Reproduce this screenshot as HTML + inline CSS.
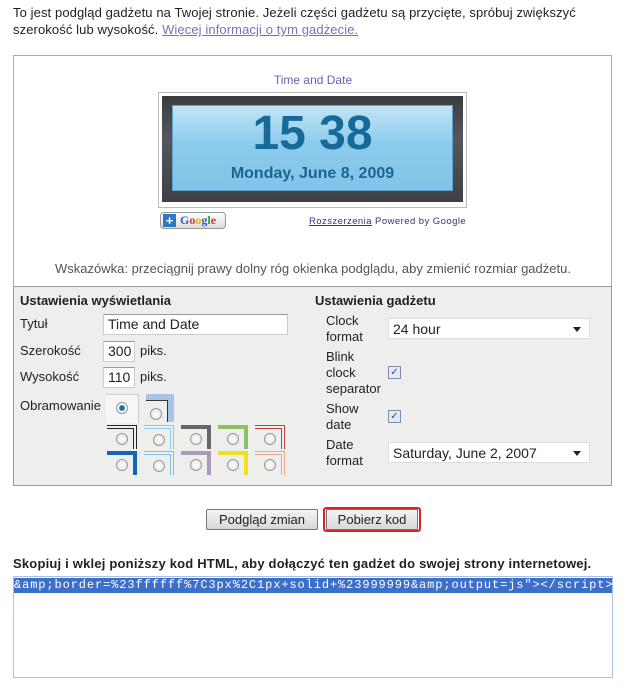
<!DOCTYPE html>
<html><head><meta charset="utf-8"><style>
body{margin:0;width:634px;height:689px;background:#fff;font-family:"Liberation Sans",Arial,sans-serif;color:#222;position:relative;overflow:hidden}
.a{position:absolute;white-space:nowrap}
.t{font-size:13px}
.inp{position:absolute;border:1px solid #ccc;border-top-color:#999;background:#fff;font:14px "Liberation Sans",sans-serif;padding:0 4px;box-sizing:border-box;line-height:19px;height:21px}
.sel{position:absolute;background:#fff;border:1px solid #ddd;font-size:14px;line-height:20px;padding-left:4px;box-sizing:border-box;height:21px}
.sel:after{content:"";position:absolute;right:8px;top:8px;border:4px solid transparent;border-top:5px solid #222}
.cb{position:absolute;width:11px;height:11px;border:1px solid #7c8fa8;background:#e4e9f2;font-size:10px;line-height:11px;text-align:center;color:#2c4fa0}
.rd{position:absolute;width:10px;height:10px;border-radius:50%;border:1px solid #999;background:radial-gradient(#fff,#ddd)}
.lbl{position:absolute;font-size:13px;line-height:16px;color:#222}
.bo{position:absolute;width:30px;height:24px}
</style></head><body>
<div class="a t" style="left:13px;top:5px;letter-spacing:0.1px">To jest podgląd gadżetu na Twojej stronie. Jeżeli części gadżetu są przycięte, spróbuj zwiększyć</div>
<div class="a t" style="left:13px;top:22px;letter-spacing:0.1px">szerokość lub wysokość. <span style="color:#7a6fc0;text-decoration:underline">Więcej informacji o tym gadżecie.</span></div>

<div class="a" style="left:13px;top:55px;width:599px;height:431px;border:1px solid #aaa;box-sizing:border-box"></div>
<div class="a" style="left:0;width:626px;top:73px;text-align:center;font-size:12px;color:#6b62b3">Time and Date</div>
<div class="a" style="left:158px;top:92px;width:309px;height:116px;border:1px solid #bbb;box-sizing:border-box;background:#fff"></div>
<div class="a" style="left:162px;top:96px;width:301px;height:106px;background:linear-gradient(#3a3b3f,#55575c 40%,#3f4044)"></div>
<div class="a" style="left:172px;top:105px;width:281px;height:86px;background:linear-gradient(#c4e4f5,#8ccbec 45%,#82c3e8);border:1px solid #5aa3cc;box-sizing:border-box"></div>
<div class="a" style="left:162px;width:301px;top:108px;text-align:center;font-size:48px;font-weight:bold;color:#156a99;line-height:52px">15 38</div>
<div class="a" style="left:162px;width:301px;top:165px;text-align:center;font-size:16px;font-weight:bold;color:#1d6590">Monday, June 8, 2009</div>
<div class="a" style="left:160px;top:212px;width:66px;height:17px;border:1px solid #999;border-radius:4px;background:linear-gradient(#fff,#ddd);box-sizing:border-box"></div>
<div class="a" style="left:163px;top:214px;width:13px;height:13px;background:#2a78c8;color:#fff;font-size:13px;font-weight:bold;line-height:13px;text-align:center">+</div>
<div class="a" style="left:180px;top:213px;font-family:'Liberation Serif',serif;font-size:12px;font-weight:bold;color:#3a5cc0">G<span style="color:#d33">o</span><span style="color:#e8b400">o</span>g<span style="color:#2a2">l</span><span style="color:#d33">e</span></div>
<div class="a" style="left:309px;top:216px;font-size:9.5px;color:#2a3a70;letter-spacing:0.45px"><span style="text-decoration:underline">Rozszerzenia</span> Powered by Google</div>
<div class="a" style="left:13px;width:600px;top:261px;text-align:center;font-size:13px;color:#555">Wskazówka: przeciągnij prawy dolny róg okienka podglądu, aby zmienić rozmiar gadżetu.</div>

<div class="a" style="left:13px;top:286px;width:599px;height:200px;background:#eeeeec;border:1px solid #999;box-sizing:border-box"></div>
<div class="a" style="left:20px;top:293px;font-size:13px;font-weight:bold">Ustawienia wyświetlania</div>
<div class="a" style="left:315px;top:293px;font-size:13px;font-weight:bold">Ustawienia gadżetu</div>
<div class="lbl" style="left:20px;top:316px">Tytuł</div>
<div class="inp" style="left:103px;top:314px;width:185px">Time and Date</div>
<div class="lbl" style="left:20px;top:343px">Szerokość</div>
<div class="inp" style="left:103px;top:341px;width:32px">300</div><div class="lbl" style="left:140px;top:343px">piks.</div>
<div class="lbl" style="left:20px;top:369px">Wysokość</div>
<div class="inp" style="left:103px;top:367px;width:32px">110</div><div class="lbl" style="left:140px;top:369px">piks.</div>
<div class="lbl" style="left:20px;top:398px">Obramowanie</div>
<div class="a" style="left:106px;top:394px;width:32px;height:28px;border-right:1px solid #ccc;border-top:1px solid #ccc;background:#f6f6f6"></div>
<div class="rd" style="left:116px;top:402px;background:radial-gradient(#1a6ea8 35%,#fff 45%,#ddd)"></div>
<div class="a" style="left:146px;top:394px;width:28px;height:28px;border-top:6px solid #a9c3e6;border-right:6px solid #a9c3e6;box-sizing:border-box"></div>
<div class="a" style="left:146px;top:400px;width:22px;height:22px;border-top:1px solid #333;border-right:1px solid #333;box-sizing:border-box"></div>
<div class="rd" style="left:150px;top:408px"></div>
<div class="bo" style="left:107px;top:425px;border-top:4px double #222;border-right:4px double #222;box-sizing:border-box"></div>
<div class="bo" style="left:144px;top:425px;border-top:4px double #8ccbec;border-right:4px double #8ccbec;box-sizing:border-box"></div>
<div class="bo" style="left:181px;top:425px;border-top:4px solid #666;border-right:4px solid #666;box-sizing:border-box"></div>
<div class="bo" style="left:218px;top:425px;border-top:4px solid #8cc063;border-right:4px solid #8cc063;box-sizing:border-box"></div>
<div class="bo" style="left:255px;top:425px;border-top:4px double #c8423d;border-right:4px double #c8423d;box-sizing:border-box"></div>
<div class="bo" style="left:107px;top:451px;border-top:4px solid #1565b0;border-right:4px solid #1565b0;box-sizing:border-box"></div>
<div class="bo" style="left:144px;top:451px;border-top:4px double #7cc0ea;border-right:4px double #7cc0ea;box-sizing:border-box"></div>
<div class="bo" style="left:181px;top:451px;border-top:4px solid #a89ab8;border-right:4px solid #a89ab8;box-sizing:border-box"></div>
<div class="bo" style="left:218px;top:451px;border-top:4px solid #f0e020;border-right:4px solid #f0e020;box-sizing:border-box"></div>
<div class="bo" style="left:255px;top:451px;border-top:4px double #f0a888;border-right:4px double #f0a888;box-sizing:border-box"></div>
<div class="rd" style="left:116px;top:433px"></div><div class="rd" style="left:153px;top:434px"></div><div class="rd" style="left:190px;top:433px"></div><div class="rd" style="left:227px;top:433px"></div><div class="rd" style="left:264px;top:433px"></div>
<div class="rd" style="left:116px;top:459px"></div><div class="rd" style="left:153px;top:460px"></div><div class="rd" style="left:190px;top:459px"></div><div class="rd" style="left:227px;top:459px"></div><div class="rd" style="left:264px;top:459px"></div>

<div class="lbl" style="left:326px;top:313px">Clock<br>format</div>
<div class="sel" style="left:388px;top:318px;width:202px">24 hour</div>
<div class="lbl" style="left:326px;top:349px">Blink<br>clock<br>separator</div>
<div class="cb" style="left:388px;top:366px">✓</div>
<div class="lbl" style="left:326px;top:401px">Show<br>date</div>
<div class="cb" style="left:388px;top:410px">✓</div>
<div class="lbl" style="left:326px;top:437px">Date<br>format</div>
<div class="sel" style="left:388px;top:442px;width:202px">Saturday, June 2, 2007</div>

<div class="a" style="left:206px;top:509px;width:112px;height:21px;border:1px solid #777;border-radius:2px;background:linear-gradient(#f4f4f4,#d8d8d8);box-sizing:border-box;text-align:center;font-size:13px;line-height:19px">Podgląd zmian</div>
<div class="a" style="left:323px;top:507px;width:98px;height:25px;border:2px solid #d8232a;border-radius:3px;box-sizing:border-box"></div>
<div class="a" style="left:326px;top:509px;width:92px;height:21px;border:1px solid #777;background:linear-gradient(#f4f4f4,#d8d8d8);box-sizing:border-box;text-align:center;font-size:13px;line-height:19px">Pobierz kod</div>

<div class="a" style="left:13px;top:556px;font-size:13px;font-weight:bold;letter-spacing:0.2px">Skopiuj i wklej poniższy kod HTML, aby dołączyć ten gadżet do swojej strony internetowej.</div>
<div class="a" style="left:13px;top:576px;width:600px;height:102px;border:1px solid #a9c3e6;box-sizing:border-box;background:#fff;overflow:hidden">
<div style="background:#3b6fc9;color:#fff;font-family:'Liberation Mono',monospace;font-size:12px;line-height:15px;white-space:nowrap;margin-top:1px;letter-spacing:0.9px">&amp;amp;border=%23ffffff%7C3px%2C1px+solid+%23999999&amp;amp;output=js"&gt;&lt;/script&gt;</div></div>
</body></html>
